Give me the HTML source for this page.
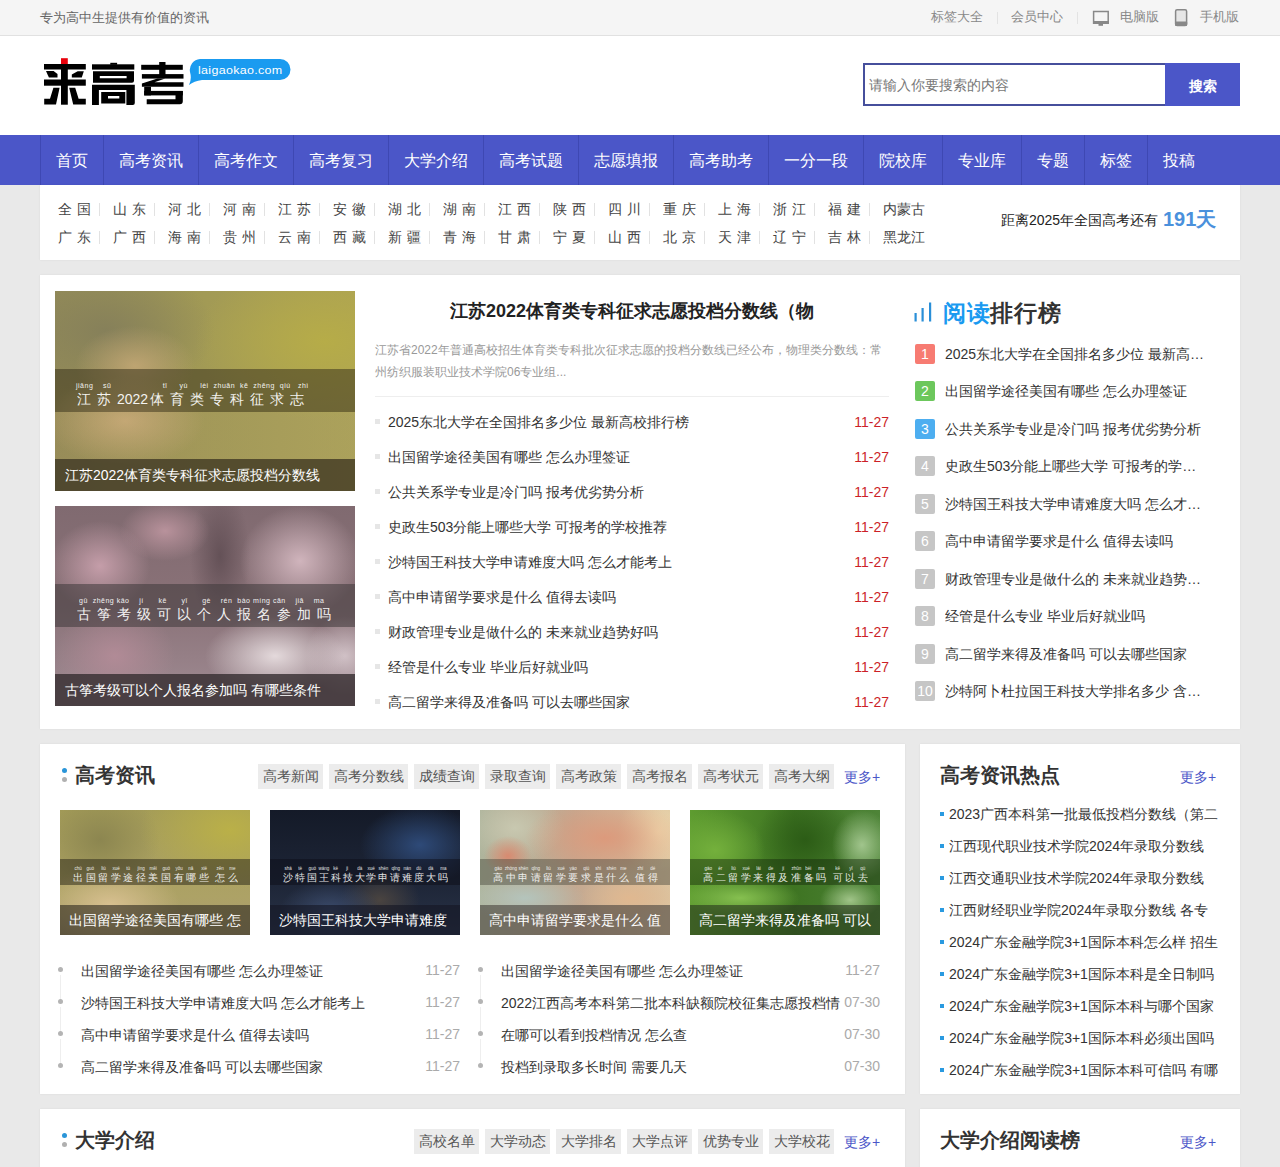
<!DOCTYPE html>
<html><head><meta charset="utf-8">
<style>
*{margin:0;padding:0;box-sizing:border-box}
html,body{width:1280px;height:1167px;overflow:hidden}
body{background:#e9e9e9;font-family:"Liberation Sans",sans-serif;color:#333;position:relative}
.abs{position:absolute}
a{color:inherit;text-decoration:none}
ul{list-style:none}
/* top bar */
.topbar{position:absolute;left:0;top:0;width:1280px;height:36px;background:#f5f5f5;border-bottom:1px solid #e1e1e1}
.topbar .slogan{position:absolute;left:40px;top:9px;font-size:13px;line-height:18px;color:#666}
.topbar .tl{position:absolute;top:8px;font-size:13px;line-height:18px;color:#888;white-space:nowrap}
.topbar .sep{position:absolute;top:12px;width:1px;height:12px;background:#e3e3e3}
/* header */
.header{position:absolute;left:0;top:36px;width:1280px;height:99px;background:#fff}
/* nav */
.nav{position:absolute;left:0;top:135px;width:1280px;height:50px;background:#4b56c8}
.nav .item{position:absolute;top:0;height:50px;border-left:1px solid #3e48b3;color:#fff;font-size:16px;line-height:52px;padding:0 15px;white-space:nowrap}
.box{position:absolute;background:#fff;box-shadow:0 0 2px rgba(0,0,0,.07)}

.prov{left:40px;top:185px;width:1200px;height:75px}
.prov .p{position:absolute;font-size:14px;line-height:18px;color:#444;letter-spacing:5px;white-space:nowrap}
.prov .p3{letter-spacing:0}
.prov .s{position:absolute;width:1px;height:13px;background:#e2e2e2}
.panel{left:40px;top:275px;width:1200px;height:454px}
.pic{position:absolute;overflow:hidden}
.pic .band{position:absolute;left:0;width:100%;background:rgba(40,36,30,.42)}
.pic .cap{position:absolute;left:0;bottom:0;width:100%;background:rgba(30,26,20,.62);color:#fff;white-space:nowrap;overflow:hidden}
.pic .py{position:absolute;color:#fff;white-space:nowrap;opacity:.92}
.ml{position:absolute;left:335px;width:514px}
.ml .li{position:absolute;left:0;width:514px;height:20px;font-size:14px;line-height:20px;color:#333;white-space:nowrap}
.ml .li:before{content:"";position:absolute;left:0;top:7px;width:5px;height:5px;background:#e6e6e6}
.ml .li span{position:absolute;left:13px}
.ml .li i{position:absolute;right:0;font-style:normal;color:#cc1f28}
.rank .r{position:absolute;left:875px;width:300px;height:20px}
.rank .r b{position:absolute;left:0;top:0;width:20px;height:20px;border-radius:2px;background:#c6c6c6;color:#fff;font-weight:normal;font-size:14px;line-height:20px;text-align:center}
.rank .r span{position:absolute;left:30px;top:0;width:262px;font-size:14px;line-height:20px;color:#333;white-space:nowrap;overflow:hidden;text-overflow:ellipsis}

.sec{position:absolute;background:#fff;box-shadow:0 0 2px rgba(0,0,0,.07)}
.sec .dot1{position:absolute;width:5px;height:5px;border-radius:50%;background:#2a95d8}
.sec .dot2{position:absolute;width:5px;height:5px;border-radius:50%;background:#b0b0b0}
.sec .tt{position:absolute;font-size:20px;line-height:26px;font-weight:bold;color:#333;white-space:nowrap}
.sec .tags{position:absolute;right:71px;height:25px;white-space:nowrap;font-size:0}
.sec .tags a{display:inline-block;margin-left:6px;height:25px;padding:0 4px 0 5px;background:#ececec;color:#555;font-size:14px;line-height:25px}
.sec .more{position:absolute;font-size:14px;line-height:18px;color:#4b56c8;white-space:nowrap}
.tl2 .it{position:absolute;height:20px;width:400px;font-size:14px;line-height:20px;color:#333;white-space:nowrap}
.tl2 .it:before{content:"";position:absolute;left:-2px;top:6px;width:5px;height:5px;border-radius:50%;background:#b4b4b4}
.tl2 .it:after{content:"";position:absolute;left:0;top:14px;width:1px;height:26px;background:#eee}
.tl2 .it.last:after{display:none}
.tl2 .it span{position:absolute;left:21px}
.tl2 .it i{position:absolute;right:0;top:-1.5px;font-style:normal;color:#aaa}
.hot .h{position:absolute;left:20px;width:280px;height:20px;font-size:14px;line-height:20px;color:#333;white-space:nowrap;overflow:hidden}
.hot .h:before{content:"";position:absolute;left:0;top:8px;width:4px;height:4px;background:#2a9ae0}
.hot .h span{position:absolute;left:9px;width:272px;height:20px;white-space:normal;overflow:hidden;word-break:break-all}

.pyb{position:absolute;left:13px;top:55px;width:165px;display:flex;justify-content:space-between;color:#fff;opacity:.88}
.pyb u{text-decoration:none;display:flex;flex-direction:column;align-items:center;width:10px}
.pyb u s{text-decoration:none;font-size:5px;line-height:7px;white-space:nowrap;transform:scaleX(.9)}
.pyb u em{font-style:normal;font-size:9.5px;line-height:12px}
</style></head><body>

<div class="topbar">
  <div class="slogan">专为高中生提供有价值的资讯</div>
  <div class="tl" style="left:931px">标签大全</div>
  <div class="sep" style="left:997px"></div>
  <div class="tl" style="left:1011px">会员中心</div>
  <div class="sep" style="left:1077px"></div>
  <svg class="abs" style="left:1092px;top:10px" width="18" height="17" viewBox="0 0 18 17"><path d="M1.6 1.6 H16.2 V13.2 H1.6 Z" fill="none" stroke="#888" stroke-width="1.5"/><rect x="1" y="11" width="16" height="2.8" fill="#888"/><rect x="6.5" y="13.6" width="4.5" height="2.2" fill="#888"/></svg>
  <div class="tl" style="left:1120px">电脑版</div>
  <svg class="abs" style="left:1174px;top:9px" width="14" height="18" viewBox="0 0 14 18"><rect x="1.6" y="0.8" width="11" height="15.6" rx="1.5" fill="#e6e6e6" stroke="#888" stroke-width="1.5"/><rect x="1" y="12.4" width="12.2" height="4.6" rx="1.2" fill="#888"/></svg>
  <div class="tl" style="left:1200px">手机版</div>
</div>

<div class="header">
  <svg class="abs" style="left:40px;top:19px" width="150" height="55" viewBox="40 55 150 55">
<g fill="#000">
<rect x="44" y="64" width="41.8" height="5.5"/>
<rect x="61" y="64" width="6.8" height="40.7"/>
<rect x="44" y="79.5" width="41.8" height="6.2"/>
<polygon points="46,71.1 53.6,71.1 57.5,74.1 57.5,77.5 48.9,77.5"/>
<polygon points="83.8,71.3 77.7,71.3 71.8,74.5 71.8,77.5 81.8,77.5"/>
<polygon points="53.4,87.7 59.6,87.7 56,104.5 44.2,104.5 44.2,98.8 50,98.8"/>
<polygon points="69.2,87.7 75.2,87.7 78.6,98.8 85.8,98.8 85.8,104.5 73.2,104.5"/>
<rect x="92" y="64.3" width="42.3" height="5.3"/>
<rect x="110.3" y="62.8" width="6.8" height="2"/>
<path d="M93 71.3 H134 V80.7 Q134 82.7 132 82.7 H93 Z M99.8 75.9 V78.2 H126.6 V75.9 Z" fill-rule="evenodd"/>
<path d="M92 84.7 H134.8 V103 Q134.8 105 132.8 105 H126.4 V90 H98.9 V105 H92 Z"/>
<path d="M101.2 92 H125.3 V103.4 H101.2 Z M108 96.1 V98.6 H119.3 V96.1 Z" fill-rule="evenodd"/>
<rect x="159.2" y="62" width="6.3" height="15.7"/>
<rect x="141.2" y="64.8" width="41.6" height="5"/>
<rect x="141.9" y="74.1" width="41.6" height="4.5"/>
<polygon points="157.5,78.4 165.2,78.4 154.5,82.2 183.5,82.2 183.5,86.8 141.9,86.8 141.9,83.4"/>
<rect x="144.2" y="86.8" width="6.8" height="8.6"/>
<rect x="144.2" y="90.9" width="38.6" height="4.5"/>
<path d="M175.5 90.9 H182.8 V101.3 Q182.8 104.3 179.8 104.3 H146.7 V99.3 H175.5 Z"/>
</g>
<rect x="61" y="58.2" width="6.8" height="5.8" fill="#e8000b"/>
</svg>
  <svg class="abs" style="left:186px;top:22px" width="106" height="27" viewBox="0 0 106 27"><path d="M14 1 H94 A10.5 10.5 0 0 1 94 22 H16 Q8 23 3 27 Q6 21 4 14 A11 11 0 0 1 14 1 Z" fill="#1a9bf0"/></svg>
  <div class="abs" style="left:198px;top:26px;font-size:12.5px;line-height:16px;color:#fff;letter-spacing:0.3px;transform:scaleY(.92);transform-origin:0 50%">laigaokao.com</div>
  <div class="abs" style="left:863px;top:27px;width:302px;height:43px;border:2px solid #464f9c;border-right:0;background:#fff"></div>
  <div class="abs" style="left:869px;top:40px;font-size:14px;line-height:18px;color:#777">请输入你要搜索的内容</div>
  <div class="abs" style="left:1165px;top:27px;width:75px;height:43px;background:#4b56c8;color:#fff;font-size:14px;line-height:46px;text-align:center;font-weight:bold">搜索</div>
</div>

<div class="nav">
  <div class="item" style="left:40px">首页</div>
  <div class="item" style="left:103px">高考资讯</div>
  <div class="item" style="left:198px">高考作文</div>
  <div class="item" style="left:293px">高考复习</div>
  <div class="item" style="left:388px">大学介绍</div>
  <div class="item" style="left:483px">高考试题</div>
  <div class="item" style="left:578px">志愿填报</div>
  <div class="item" style="left:673px">高考助考</div>
  <div class="item" style="left:768px">一分一段</div>
  <div class="item" style="left:863px">院校库</div>
  <div class="item" style="left:942px">专业库</div>
  <div class="item" style="left:1021px">专题</div>
  <div class="item" style="left:1084px">标签</div>
  <div class="item" style="left:1147px">投稿</div>
</div>

<div class="box prov">
<div class="p" style="left:18px;top:15px">全国</div><div class="s" style="left:59px;top:18px"></div><div class="p" style="left:73px;top:15px">山东</div><div class="s" style="left:114px;top:18px"></div><div class="p" style="left:128px;top:15px">河北</div><div class="s" style="left:169px;top:18px"></div><div class="p" style="left:183px;top:15px">河南</div><div class="s" style="left:224px;top:18px"></div><div class="p" style="left:238px;top:15px">江苏</div><div class="s" style="left:279px;top:18px"></div><div class="p" style="left:293px;top:15px">安徽</div><div class="s" style="left:334px;top:18px"></div><div class="p" style="left:348px;top:15px">湖北</div><div class="s" style="left:389px;top:18px"></div><div class="p" style="left:403px;top:15px">湖南</div><div class="s" style="left:444px;top:18px"></div><div class="p" style="left:458px;top:15px">江西</div><div class="s" style="left:499px;top:18px"></div><div class="p" style="left:513px;top:15px">陕西</div><div class="s" style="left:554px;top:18px"></div><div class="p" style="left:568px;top:15px">四川</div><div class="s" style="left:609px;top:18px"></div><div class="p" style="left:623px;top:15px">重庆</div><div class="s" style="left:664px;top:18px"></div><div class="p" style="left:678px;top:15px">上海</div><div class="s" style="left:719px;top:18px"></div><div class="p" style="left:733px;top:15px">浙江</div><div class="s" style="left:774px;top:18px"></div><div class="p" style="left:788px;top:15px">福建</div><div class="s" style="left:829px;top:18px"></div><div class="p p3" style="left:843px;top:15px">内蒙古</div>
<div class="p" style="left:18px;top:43px">广东</div><div class="s" style="left:59px;top:46px"></div><div class="p" style="left:73px;top:43px">广西</div><div class="s" style="left:114px;top:46px"></div><div class="p" style="left:128px;top:43px">海南</div><div class="s" style="left:169px;top:46px"></div><div class="p" style="left:183px;top:43px">贵州</div><div class="s" style="left:224px;top:46px"></div><div class="p" style="left:238px;top:43px">云南</div><div class="s" style="left:279px;top:46px"></div><div class="p" style="left:293px;top:43px">西藏</div><div class="s" style="left:334px;top:46px"></div><div class="p" style="left:348px;top:43px">新疆</div><div class="s" style="left:389px;top:46px"></div><div class="p" style="left:403px;top:43px">青海</div><div class="s" style="left:444px;top:46px"></div><div class="p" style="left:458px;top:43px">甘肃</div><div class="s" style="left:499px;top:46px"></div><div class="p" style="left:513px;top:43px">宁夏</div><div class="s" style="left:554px;top:46px"></div><div class="p" style="left:568px;top:43px">山西</div><div class="s" style="left:609px;top:46px"></div><div class="p" style="left:623px;top:43px">北京</div><div class="s" style="left:664px;top:46px"></div><div class="p" style="left:678px;top:43px">天津</div><div class="s" style="left:719px;top:46px"></div><div class="p" style="left:733px;top:43px">辽宁</div><div class="s" style="left:774px;top:46px"></div><div class="p" style="left:788px;top:43px">吉林</div><div class="s" style="left:829px;top:46px"></div><div class="p p3" style="left:843px;top:43px">黑龙江</div>
<div class="abs" style="left:961px;top:26px;font-size:14px;line-height:18px;color:#222;white-space:nowrap">距离2025年全国高考还有</div>
<div class="abs" style="left:1123px;top:21px;font-size:20px;line-height:26px;color:#4a90dc;font-weight:bold;white-space:nowrap">191天</div>
</div>
<div class="box panel">
<div class="pic" style="left:15px;top:16px;width:300px;height:200px;background:
radial-gradient(ellipse 80px 45px at 70px 130px,rgba(212,178,128,.95) 0%,rgba(212,178,128,0) 100%),
radial-gradient(ellipse 60px 40px at 80px 75px,rgba(200,170,120,.8) 0%,rgba(200,170,120,0) 100%),
radial-gradient(ellipse 130px 80px at 270px 50px,#b6ac48 0%,rgba(182,172,72,0) 100%),
radial-gradient(ellipse 110px 70px at 50px 40px,#86805a 0%,rgba(134,128,90,0) 100%),
linear-gradient(90deg,#948c58 0%,#a29a55 50%,#aca255 100%)">
<div style="position:absolute;left:0;top:121px;width:300px;height:47px;background:linear-gradient(90deg,rgba(160,140,90,.3),rgba(170,160,110,.25))"></div>
<div class="band" style="top:78px;height:43px;background:rgba(60,52,30,.55)"></div>
<div class="py" style="left:21px;top:91px;font-size:7px;line-height:8px;letter-spacing:.5px">jiāng&nbsp;&nbsp;&nbsp;&nbsp;sū&nbsp;&nbsp;&nbsp;&nbsp;&nbsp;&nbsp;&nbsp;&nbsp;&nbsp;&nbsp;&nbsp;&nbsp;&nbsp;&nbsp;&nbsp;&nbsp;&nbsp;&nbsp;&nbsp;&nbsp;&nbsp;tǐ&nbsp;&nbsp;&nbsp;&nbsp;&nbsp;yù&nbsp;&nbsp;&nbsp;&nbsp;&nbsp;lèi&nbsp;&nbsp;zhuān&nbsp;&nbsp;kē&nbsp;&nbsp;zhēng&nbsp;&nbsp;qiú&nbsp;&nbsp;&nbsp;zhì</div>
<div class="py" style="left:22px;top:100px;font-size:14px;line-height:17px;letter-spacing:6px">江苏<span style="letter-spacing:0">202</span><span style="letter-spacing:2px">2</span>体育类专科征求志</div>
<div class="cap" style="height:32px;font-size:14px;line-height:32px;padding-left:10px;background:rgba(62,54,36,.78)">江苏2022体育类专科征求志愿投档分数线</div>
</div>
<div class="pic" style="left:15px;top:231px;width:300px;height:200px;background:
radial-gradient(ellipse 70px 40px at 220px 150px,rgba(232,222,224,.95) 0%,rgba(232,222,224,0) 100%),
radial-gradient(ellipse 40px 40px at 290px 150px,rgba(215,200,205,.9) 0%,rgba(215,200,205,0) 100%),
radial-gradient(ellipse 60px 50px at 60px 150px,rgba(180,140,152,.9) 0%,rgba(180,140,152,0) 100%),
radial-gradient(ellipse 50px 45px at 45px 60px,rgba(200,160,172,.95) 0%,rgba(200,160,172,0) 100%),
radial-gradient(ellipse 45px 30px at 110px 25px,rgba(190,150,160,.9) 0%,rgba(190,150,160,0) 100%),
radial-gradient(ellipse 60px 55px at 245px 55px,rgba(212,184,192,.95) 0%,rgba(212,184,192,0) 100%),
radial-gradient(ellipse 30px 70px at 165px 50px,rgba(92,74,80,.8) 0%,rgba(80,64,70,0) 100%),
linear-gradient(180deg,#806a70 0%,#8a7278 50%,#a08c94 100%)">
<div class="band" style="top:78px;height:43px;background:rgba(62,56,58,.55)"></div>
<div class="py" style="left:24px;top:91px;font-size:7px;line-height:8px;letter-spacing:.5px">gǔ&nbsp;&nbsp;zhēng&nbsp;kǎo&nbsp;&nbsp;&nbsp;&nbsp;jí&nbsp;&nbsp;&nbsp;&nbsp;&nbsp;&nbsp;kě&nbsp;&nbsp;&nbsp;&nbsp;&nbsp;&nbsp;yǐ&nbsp;&nbsp;&nbsp;&nbsp;&nbsp;&nbsp;gè&nbsp;&nbsp;&nbsp;&nbsp;rén&nbsp;&nbsp;bào&nbsp;míng&nbsp;cān&nbsp;&nbsp;&nbsp;&nbsp;jiā&nbsp;&nbsp;&nbsp;&nbsp;ma</div>
<div class="py" style="left:22px;top:100px;font-size:14px;line-height:17px;letter-spacing:6px">古筝考级可以个人报名参加吗</div>
<div class="cap" style="height:32px;font-size:14px;line-height:32px;padding-left:10px;background:rgba(50,42,45,.78)">古筝考级可以个人报名参加吗 有哪些条件</div>
</div>
<div class="abs" style="left:335px;top:23px;width:514px;text-align:center;font-size:18px;line-height:26px;font-weight:bold;color:#222;white-space:nowrap;overflow:hidden">江苏2022体育类专科征求志愿投档分数线（物</div>
<div class="abs" style="left:335px;top:64px;width:514px;font-size:12px;line-height:22px;color:#999">江苏省2022年普通高校招生体育类专科批次征求志愿的投档分数线已经公布，物理类分数线：常州纺织服装职业技术学院06专业组...</div>
<div class="abs" style="left:335px;top:121px;width:514px;height:1px;background:#eee"></div>
<div class="ml">
<div class="li" style="top:137px"><span>2025东北大学在全国排名多少位 最新高校排行榜</span><i>11-27</i></div>
<div class="li" style="top:172px"><span>出国留学途径美国有哪些 怎么办理签证</span><i>11-27</i></div>
<div class="li" style="top:207px"><span>公共关系学专业是冷门吗 报考优劣势分析</span><i>11-27</i></div>
<div class="li" style="top:242px"><span>史政生503分能上哪些大学 可报考的学校推荐</span><i>11-27</i></div>
<div class="li" style="top:277px"><span>沙特国王科技大学申请难度大吗 怎么才能考上</span><i>11-27</i></div>
<div class="li" style="top:312px"><span>高中申请留学要求是什么 值得去读吗</span><i>11-27</i></div>
<div class="li" style="top:347px"><span>财政管理专业是做什么的 未来就业趋势好吗</span><i>11-27</i></div>
<div class="li" style="top:382px"><span>经管是什么专业 毕业后好就业吗</span><i>11-27</i></div>
<div class="li" style="top:417px"><span>高二留学来得及准备吗 可以去哪些国家</span><i>11-27</i></div>
</div>
<svg class="abs" style="left:873px;top:26px" width="20" height="22" viewBox="0 0 20 22"><rect x="1.5" y="12" width="2.2" height="8.5" fill="#2a8fd8"/><rect x="8.5" y="7" width="2.2" height="13.5" fill="#2a8fd8"/><rect x="16" y="1.5" width="2.2" height="19" fill="#2a8fd8"/></svg>
<div class="abs" style="left:903px;top:23px;font-size:23px;line-height:30px;font-weight:bold;color:#333;white-space:nowrap;letter-spacing:.7px"><span style="color:#1a9af0">阅读</span>排行榜</div>
<div class="rank">
<div class="r" style="top:69.0px"><b style="background:#f77b72">1</b><span>2025东北大学在全国排名多少位 最新高校排行榜</span></div>
<div class="r" style="top:106.45px"><b style="background:#6cc75c">2</b><span>出国留学途径美国有哪些 怎么办理签证</span></div>
<div class="r" style="top:144.0px"><b style="background:#4daef0">3</b><span>公共关系学专业是冷门吗 报考优劣势分析</span></div>
<div class="r" style="top:181.35px"><b>4</b><span>史政生503分能上哪些大学 可报考的学校推荐</span></div>
<div class="r" style="top:219.0px"><b>5</b><span>沙特国王科技大学申请难度大吗 怎么才能考上</span></div>
<div class="r" style="top:256.25px"><b>6</b><span>高中申请留学要求是什么 值得去读吗</span></div>
<div class="r" style="top:294.0px"><b>7</b><span>财政管理专业是做什么的 未来就业趋势好吗</span></div>
<div class="r" style="top:331.15px"><b>8</b><span>经管是什么专业 毕业后好就业吗</span></div>
<div class="r" style="top:369.0px"><b>9</b><span>高二留学来得及准备吗 可以去哪些国家</span></div>
<div class="r" style="top:406.05px"><b>10</b><span>沙特阿卜杜拉国王科技大学排名多少 含金量高吗</span></div>
</div>
</div>
<div class="sec" style="left:40px;top:744px;width:865px;height:350px">
<div class="dot1" style="left:22px;top:24px"></div><div class="dot2" style="left:22px;top:33px"></div>
<div class="tt" style="left:35px;top:18px">高考资讯</div>
<div class="tags" style="top:20px"><a>高考新闻</a><a>高考分数线</a><a>成绩查询</a><a>录取查询</a><a>高考政策</a><a>高考报名</a><a>高考状元</a><a>高考大纲</a></div>
<div class="more" style="left:804px;top:24px">更多+</div>
<div class="pic" style="left:20px;top:66px;width:190px;height:125px;background:radial-gradient(ellipse 70px 40px at 50px 95px,#d8c090 0%,rgba(216,192,144,0) 100%),
radial-gradient(ellipse 90px 60px at 170px 20px,#bab048 0%,rgba(186,176,72,0) 100%),
radial-gradient(ellipse 60px 50px at 40px 30px,#8c8650 0%,rgba(140,134,80,0) 100%),
linear-gradient(180deg,#a49c58,#ada266 70%,#a89a70)">
<div class="band" style="top:49px;height:26px;background:rgba(50,45,30,.55)"></div>
<div class="pyb"><u><s>chū</s><em>出</em></u><u><s>guó</s><em>国</em></u><u><s>liú</s><em>留</em></u><u><s>xué</s><em>学</em></u><u><s>tú</s><em>途</em></u><u><s>jìng</s><em>径</em></u><u><s>měi</s><em>美</em></u><u><s>guó</s><em>国</em></u><u><s>yǒu</s><em>有</em></u><u><s>nǎ</s><em>哪</em></u><u><s>xiē</s><em>些</em></u><u style="margin-left:4px"><s>zěn</s><em>怎</em></u><u><s>me</s><em>么</em></u></div>
<div class="cap" style="height:30px;font-size:14px;line-height:30px;padding-left:9px;background:rgba(45,40,30,.6)">出国留学途径美国有哪些 怎</div>
</div>
<div class="pic" style="left:230px;top:66px;width:190px;height:125px;background:radial-gradient(ellipse 60px 40px at 150px 35px,#2e4a78 0%,rgba(46,74,120,0) 100%),
radial-gradient(ellipse 50px 30px at 60px 100px,#3a4a6a 0%,rgba(58,74,106,0) 100%),
radial-gradient(ellipse 40px 30px at 110px 90px,#4a4440 0%,rgba(74,68,64,0) 100%),
linear-gradient(180deg,#141a28,#1e2638 60%,#2a3448)">
<div class="band" style="top:49px;height:26px;background:rgba(10,12,20,.45)"></div>
<div class="pyb"><u><s>shā</s><em>沙</em></u><u><s>tè</s><em>特</em></u><u><s>guó</s><em>国</em></u><u><s>wáng</s><em>王</em></u><u><s>kē</s><em>科</em></u><u><s>jì</s><em>技</em></u><u><s>dà</s><em>大</em></u><u><s>xué</s><em>学</em></u><u><s>shēn</s><em>申</em></u><u><s>qǐng</s><em>请</em></u><u><s>nán</s><em>难</em></u><u><s>dù</s><em>度</em></u><u><s>dà</s><em>大</em></u><u><s>ma</s><em>吗</em></u></div>
<div class="cap" style="height:30px;font-size:14px;line-height:30px;padding-left:9px;background:rgba(20,22,35,.6)">沙特国王科技大学申请难度</div>
</div>
<div class="pic" style="left:440px;top:66px;width:190px;height:125px;background:radial-gradient(ellipse 80px 40px at 125px 28px,#dc9a7c 0%,rgba(220,154,124,0) 100%),
radial-gradient(ellipse 40px 40px at 178px 22px,#f0dcb0 0%,rgba(240,220,176,0) 100%),
radial-gradient(ellipse 24px 20px at 28px 46px,#d88a70 0%,rgba(216,138,112,0) 100%),
radial-gradient(ellipse 50px 35px at 35px 18px,#c8c8b0 0%,rgba(200,200,176,0) 100%),
radial-gradient(ellipse 60px 25px at 45px 88px,#b4c4bc 0%,rgba(180,196,188,0) 100%),
radial-gradient(ellipse 50px 25px at 150px 88px,#e0b890 0%,rgba(224,184,144,0) 100%),
linear-gradient(90deg,#aeb49c,#c4a890 50%,#dcc4a0)">
<div class="band" style="top:49px;height:26px;background:rgba(70,70,60,.45)"></div>
<div class="pyb"><u><s>gāo</s><em>高</em></u><u><s>zhōng</s><em>中</em></u><u><s>shēn</s><em>申</em></u><u><s>qǐng</s><em>请</em></u><u><s>liú</s><em>留</em></u><u><s>xué</s><em>学</em></u><u><s>yāo</s><em>要</em></u><u><s>qiú</s><em>求</em></u><u><s>shì</s><em>是</em></u><u><s>shén</s><em>什</em></u><u><s>me</s><em>么</em></u><u style="margin-left:4px"><s>zhí</s><em>值</em></u><u><s>dé</s><em>得</em></u></div>
<div class="cap" style="height:30px;font-size:14px;line-height:30px;padding-left:9px;background:rgba(70,65,60,.6)">高中申请留学要求是什么 值</div>
</div>
<div class="pic" style="left:650px;top:66px;width:190px;height:125px;background:radial-gradient(ellipse 30px 35px at 172px 35px,rgba(170,204,150,.9) 0%,rgba(170,204,150,0) 100%),
radial-gradient(ellipse 50px 40px at 25px 40px,#74b03c 0%,rgba(116,176,60,0) 100%),
radial-gradient(ellipse 50px 45px at 115px 30px,#2c5c16 0%,rgba(44,92,22,0) 100%),
radial-gradient(ellipse 60px 20px at 50px 88px,#86c050 0%,rgba(134,192,80,0) 100%),
radial-gradient(ellipse 30px 20px at 160px 90px,#a0c488 0%,rgba(160,196,136,0) 100%),
linear-gradient(90deg,#5e9c30,#3e7422 55%,#4e8438)">
<div class="band" style="top:49px;height:26px;background:rgba(20,40,10,.45)"></div>
<div class="pyb"><u><s>gāo</s><em>高</em></u><u><s>èr</s><em>二</em></u><u><s>liú</s><em>留</em></u><u><s>xué</s><em>学</em></u><u><s>lái</s><em>来</em></u><u><s>de</s><em>得</em></u><u><s>jí</s><em>及</em></u><u><s>zhǔn</s><em>准</em></u><u><s>bèi</s><em>备</em></u><u><s>ma</s><em>吗</em></u><u style="margin-left:4px"><s>kě</s><em>可</em></u><u><s>yǐ</s><em>以</em></u><u><s>qù</s><em>去</em></u></div>
<div class="cap" style="height:30px;font-size:14px;line-height:30px;padding-left:9px;background:rgba(40,55,30,.6)">高二留学来得及准备吗 可以</div>
</div>
<div class="tl2">
<div class="it" style="left:20px;top:217px"><span>出国留学途径美国有哪些 怎么办理签证</span><i>11-27</i></div>
<div class="it" style="left:20px;top:249px"><span>沙特国王科技大学申请难度大吗 怎么才能考上</span><i>11-27</i></div>
<div class="it" style="left:20px;top:281px"><span>高中申请留学要求是什么 值得去读吗</span><i>11-27</i></div>
<div class="it last" style="left:20px;top:313px"><span>高二留学来得及准备吗 可以去哪些国家</span><i>11-27</i></div>
<div class="it" style="left:440px;top:217px"><span>出国留学途径美国有哪些 怎么办理签证</span><i>11-27</i></div>
<div class="it" style="left:440px;top:249px"><span>2022江西高考本科第二批本科缺额院校征集志愿投档情</span><i>07-30</i></div>
<div class="it" style="left:440px;top:281px"><span>在哪可以看到投档情况 怎么查</span><i>07-30</i></div>
<div class="it last" style="left:440px;top:313px"><span>投档到录取多长时间 需要几天</span><i>07-30</i></div>
</div>
</div>
<div class="sec hot" style="left:920px;top:744px;width:320px;height:350px">
<div class="tt" style="left:20px;top:18px">高考资讯热点</div>
<div class="more" style="left:260px;top:24px">更多+</div>
<div class="h" style="top:60px"><span>2023广西本科第一批最低投档分数线（第二次征集）</span></div>
<div class="h" style="top:92px"><span>江西现代职业技术学院2024年录取分数线</span></div>
<div class="h" style="top:124px"><span>江西交通职业技术学院2024年录取分数线</span></div>
<div class="h" style="top:156px"><span>江西财经职业学院2024年录取分数线 各专业录取分数</span></div>
<div class="h" style="top:188px"><span>2024广东金融学院3+1国际本科怎么样 招生要求</span></div>
<div class="h" style="top:220px"><span>2024广东金融学院3+1国际本科是全日制吗</span></div>
<div class="h" style="top:252px"><span>2024广东金融学院3+1国际本科与哪个国家</span></div>
<div class="h" style="top:284px"><span>2024广东金融学院3+1国际本科必须出国吗</span></div>
<div class="h" style="top:316px"><span>2024广东金融学院3+1国际本科可信吗 有哪些</span></div>
</div>
<div class="sec" style="left:40px;top:1109px;width:865px;height:200px">
<div class="dot1" style="left:22px;top:24px"></div><div class="dot2" style="left:22px;top:33px"></div>
<div class="tt" style="left:35px;top:18px">大学介绍</div>
<div class="tags" style="top:20px"><a>高校名单</a><a>大学动态</a><a>大学排名</a><a>大学点评</a><a>优势专业</a><a>大学校花</a></div>
<div class="more" style="left:804px;top:24px">更多+</div>
</div>
<div class="sec" style="left:920px;top:1109px;width:320px;height:200px">
<div class="tt" style="left:20px;top:18px">大学介绍阅读榜</div>
<div class="more" style="left:260px;top:24px">更多+</div>
</div>
</body></html>
